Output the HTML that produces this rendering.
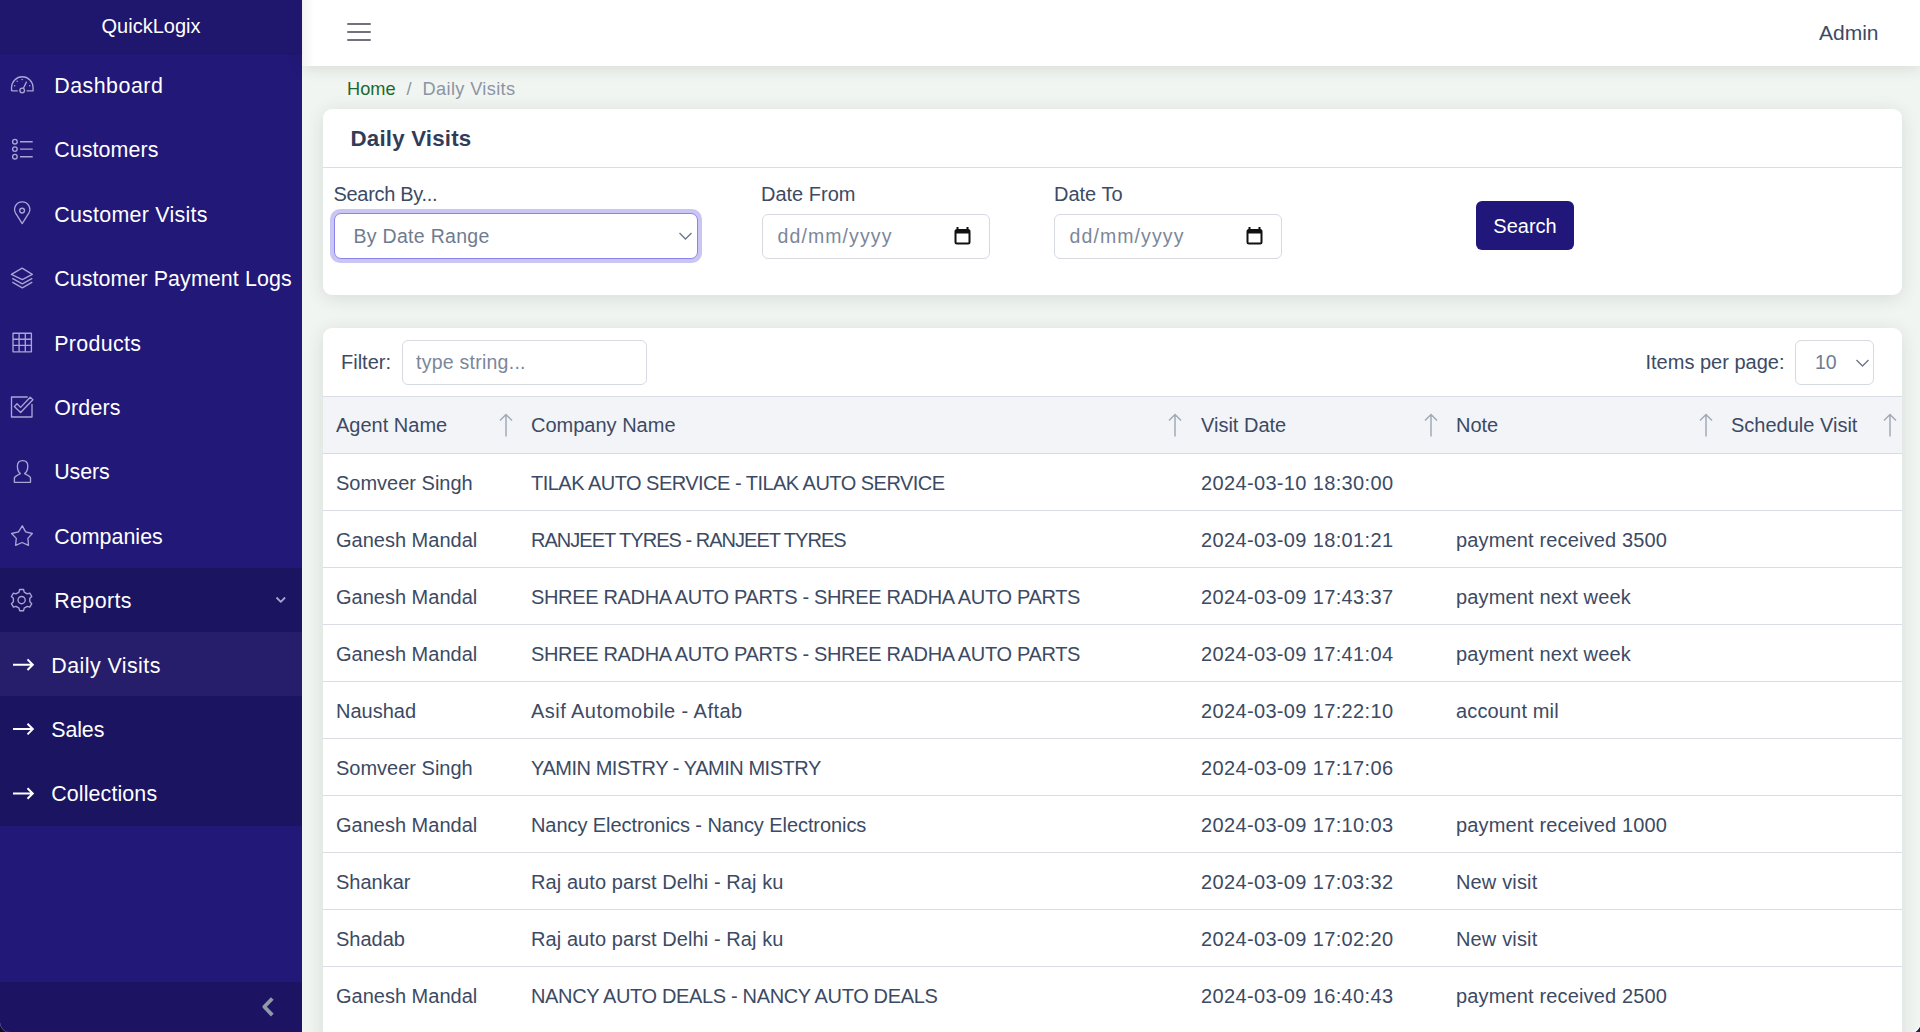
<!DOCTYPE html>
<html><head><meta charset="utf-8">
<style>
*{box-sizing:border-box;margin:0;padding:0}
html,body{width:1920px;height:1032px;overflow:hidden}
body{position:relative;background:#f1f5f1;font-family:"Liberation Sans",sans-serif;color:#3c4a64}
.abs{position:absolute}
#sb{position:absolute;left:0;top:0;width:302px;height:1032px;background:#221877;color:#fff}
#brand{position:absolute;left:0;top:0;width:302px;height:53px;background:#1f166e;box-shadow:0 1px 1px rgba(0,0,0,.10);z-index:1;text-align:center;font-size:20px;line-height:52px}
.nav{position:absolute;left:0;width:302px;height:64.4px;font-size:21.4px;line-height:64.4px;letter-spacing:.1px;white-space:nowrap}
.nav .t{position:absolute;top:1px}
#grp{position:absolute;left:0;top:568px;width:302px;height:257.6px;background:#1b1461}
#tog{position:absolute;left:0;top:981.5px;width:302px;height:50.5px;background:#1c1463}
#hdr{position:absolute;left:302px;top:0;width:1618px;height:66px;background:#fff;box-shadow:0 2px 14px rgba(20,45,30,.13)}
#hdr:before{content:'';position:absolute;left:0;top:0;width:12px;height:66px;background:linear-gradient(to right,rgba(0,0,0,.05),rgba(0,0,0,0))}
.card{position:absolute;left:323px;width:1579px;background:#fff;border-radius:9px;box-shadow:0 3px 18px rgba(20,45,30,.12)}
.lbl{position:absolute;font-size:20px;line-height:24px;white-space:nowrap}
.inp{position:absolute;height:45px;border:1px solid #d6d9df;border-radius:6px;background:#fff}
.ph{position:absolute;font-size:19.5px;line-height:24px;color:#7b879a;white-space:nowrap}
.row{position:absolute;left:0;width:1579px;height:57px;border-bottom:1px solid #d9dce2}
.row div{position:absolute;top:1px;line-height:56px;font-size:20px;white-space:nowrap}
.arr{position:absolute}
.th{position:absolute;top:1px;line-height:55px;font-size:20px;white-space:nowrap}

.c2{letter-spacing:.35px}
.c3{letter-spacing:.15px}

</style></head><body>
<div id="sb">
  <div id="brand">QuickLogix</div>
  <div id="grp"></div>
  <div class="abs" style="left:0;top:632px;width:302px;height:64.4px;background:#261e6b"></div>
  <div id="tog"><svg class="abs" style="left:0;top:0" width="302" height="51" viewBox="0 981.5 302 51" stroke="#9198aa" fill="none" stroke-width="3.8" stroke-linejoin="round"><path d="M272.3 998 L264.3 1006.3 L272.3 1014.6"/></svg></div>
  <div class="nav" style="top:53.0px"><span class="t" style="left:54.2px;letter-spacing:0.5px">Dashboard</span></div><div class="nav" style="top:117.4px"><span class="t" style="left:54.2px;letter-spacing:0.1px">Customers</span></div><div class="nav" style="top:181.8px"><span class="t" style="left:54.2px;letter-spacing:0.28px">Customer Visits</span></div><div class="nav" style="top:246.2px"><span class="t" style="left:54.2px;letter-spacing:0.1px">Customer Payment Logs</span></div><div class="nav" style="top:310.6px"><span class="t" style="left:54.2px;letter-spacing:0.35px">Products</span></div><div class="nav" style="top:375.0px"><span class="t" style="left:54.2px;letter-spacing:0.2px">Orders</span></div><div class="nav" style="top:439.4px"><span class="t" style="left:54.2px;letter-spacing:-0.1px">Users</span></div><div class="nav" style="top:503.8px"><span class="t" style="left:54.2px;letter-spacing:0.05px">Companies</span></div><div class="nav" style="top:568.2px"><span class="t" style="left:54.2px;letter-spacing:0.4px">Reports</span></div><div class="nav" style="top:632.6px"><span class="t" style="left:51.25px;letter-spacing:0.45px">Daily Visits</span></div><div class="nav" style="top:697.0px"><span class="t" style="left:51.25px;letter-spacing:-0.1px">Sales</span></div><div class="nav" style="top:761.4px"><span class="t" style="left:51.25px;letter-spacing:0.12px">Collections</span></div><svg class="abs" style="left:0;top:0" width="302" height="1032" viewBox="0 0 302 1032" fill="none" stroke="#a9a5d6" stroke-width="1.35" stroke-linejoin="round">
<path d="M11.55 90.9 V87.5 A10.75 10.75 0 0 1 33.05 87.5 V90.9 H26.6 M11.55 90.9 H17.8"/>
<circle cx="22.2" cy="90.4" r="2.3"/><path d="M23.4 88.2 L26.6 81.6"/>
<g fill="#a9a5d6" stroke="none"><circle cx="14.6" cy="85.8" r=".75"/><circle cx="17.2" cy="81.3" r=".75"/><circle cx="22.15" cy="79.5" r=".75"/><circle cx="29.7" cy="85.8" r=".75"/></g>
<circle cx="14.9" cy="141.7" r="2.3"/><circle cx="14.9" cy="149.1" r="2.3"/><circle cx="14.9" cy="156.7" r="2.3"/>
<path d="M20 141.7H32.7M20 149.1H32.7M20 156.7H32.7"/>
<path d="M22.2 223.6 L15.6 213.2 A7.6 7.6 0 1 1 28.8 213.2 Z"/><circle cx="22.1" cy="210.6" r="2.4"/>
<path d="M11.4 274.4 L22.1 268.2 L32.3 274.4 L22.3 279.6 Z"/><path d="M12.3 278.3 L22.3 283.9 L32.3 278.3"/><path d="M12.3 282.2 L22.3 287.9 L32.3 282.2"/>
<rect x="13" y="333.2" width="18.4" height="18.6"/><path d="M19.1 333.2V351.8M25.3 333.2V351.8M13 339.2H31.4M13 345.3H31.4"/>
<path d="M27.7 397 H11.5 V417 H32 V403.9"/><path d="M14.3 406.6 L17 403.7 L20.6 407.4 L30.2 397.2 L32.9 399.7 L20.6 412.5 Z"/>
<path d="M20.3 473.6 C18.2 472, 17.4 469, 17.4 466 C17.4 462.6, 19.6 460.6, 22.6 460.6 C25.6 460.6, 27.8 462.6, 27.8 466 C27.8 469, 27 472, 24.6 473.6 C27.5 475, 29.8 476, 30.5 477.8 V482.3 H14.4 V477.8 C15.2 476, 17.4 475, 20.3 473.6 Z"/>
<path d="M22.3 525.8 L25.7 531.9 L32.3 533.5 L27.9 538.4 L28.5 545.3 L22.1 542.5 L15.6 545.3 L16.3 538.4 L11.6 533.5 L18.5 531.9 Z"/>
<path d="M19.00 592.10 L19.60 589.50 L23.60 589.50 L24.20 592.10 L27.23 593.85 L29.78 593.07 L31.78 596.53 L29.83 598.35 L29.83 601.85 L31.78 603.67 L29.78 607.13 L27.23 606.35 L24.20 608.10 L23.60 610.70 L19.60 610.70 L19.00 608.10 L15.97 606.35 L13.42 607.13 L11.42 603.67 L13.37 601.85 L13.37 598.35 L11.42 596.53 L13.42 593.07 L15.97 593.85Z"/><circle cx="21.6" cy="600.1" r="3.6"/>
<path d="M276.5 597.5 L280.8 601.8 L285.1 597.5" stroke-width="1.8"/>
<g stroke="#fff" stroke-width="2" stroke-linejoin="miter"><path d="M13 664.7H33M27.5 659.4 L32.8 664.7 L27.5 670"/><path d="M13 729.1H33M27.5 723.8 L32.8 729.1 L27.5 734.4"/><path d="M13 793.5H33M27.5 788.2 L32.8 793.5 L27.5 798.8"/></g>
</svg>
</div>

<div id="hdr">
  <div class="abs" style="left:44.6px;top:22.6px;width:24.4px;height:2.3px;background:#73707f;border-radius:1.2px"></div>
  <div class="abs" style="left:44.6px;top:30.7px;width:24.4px;height:2.3px;background:#73707f;border-radius:1.2px"></div>
  <div class="abs" style="left:44.6px;top:38.9px;width:24.4px;height:2.3px;background:#73707f;border-radius:1.2px"></div>
  <div class="abs" id="admin" style="left:1517px;top:20px;font-size:21px;line-height:25px">Admin</div>
</div>

<div class="abs" id="bc" style="left:347px;top:77.5px;font-size:18.2px;line-height:22px;white-space:nowrap"><span style="color:#1b6a2c">Home</span><span style="color:#8b94a3;padding:0 11px 0 11px">/</span><span style="color:#8b94a3;letter-spacing:.35px">Daily Visits</span></div>

<div class="card" style="top:109px;height:186px">
  <div class="abs" style="left:0;top:0;width:1579px;height:58.5px;border-bottom:1px solid #dcdde3"></div>
  <div class="abs" id="title" style="left:28px;top:124px;font-size:22.3px;font-weight:700;line-height:26px;color:#2f3d5a"></div>
</div>
<div class="abs" style="left:350.5px;top:126px;font-size:22.3px;font-weight:700;line-height:26px;color:#2f3d5a;white-space:nowrap;letter-spacing:.2px">Daily Visits</div>

<div class="lbl" style="left:333.5px;top:182px;letter-spacing:-.3px">Search By...</div>
<div class="abs" style="left:329.5px;top:209px;width:372px;height:54px;border-radius:10px;background:#c9c6f3"></div>
<div class="inp" style="left:333.5px;top:213px;width:364px;height:46px;border:1.5px solid #8c84ec;border-radius:7px"></div>
<div class="ph" style="left:353.5px;top:223.7px;color:#6f7c8f;letter-spacing:.3px">By Date Range</div>
<svg class="abs" style="left:678px;top:231px" width="15" height="10" viewBox="0 0 15 10" stroke="#6c7888" fill="none" stroke-width="1.4"><path d="M1.5 2l6 6 6-6"/></svg>

<div class="lbl" style="left:761px;top:182px">Date From</div>
<div class="inp" style="left:761.5px;top:213.5px;width:228px"></div>
<div class="ph" style="left:777.5px;top:224px;letter-spacing:1.1px">dd/mm/yyyy</div>
<svg class="abs" style="left:954px;top:227px" width="17" height="18" viewBox="0 0 17 18"><path d="M3.5 0v3M13.5 0v3" stroke="#111" stroke-width="2"/><rect x="1.5" y="3" width="14" height="13.5" rx="1.5" stroke="#111" stroke-width="2" fill="none"/><rect x="1.5" y="3" width="14" height="3.5" fill="#111"/></svg>

<div class="lbl" style="left:1054px;top:182px">Date To</div>
<div class="inp" style="left:1054px;top:213.5px;width:228px"></div>
<div class="ph" style="left:1069.5px;top:224px;letter-spacing:1.1px">dd/mm/yyyy</div>
<svg class="abs" style="left:1246px;top:227px" width="17" height="18" viewBox="0 0 17 18"><path d="M3.5 0v3M13.5 0v3" stroke="#111" stroke-width="2"/><rect x="1.5" y="3" width="14" height="13.5" rx="1.5" stroke="#111" stroke-width="2" fill="none"/><rect x="1.5" y="3" width="14" height="3.5" fill="#111"/></svg>

<div class="abs" style="left:1476px;top:201px;width:98px;height:49px;background:#21177a;border-radius:6px;color:#fff;font-size:20px;line-height:51px;text-align:center">Search</div>

<div class="card" style="top:328px;height:720px;overflow:hidden">
  <div class="lbl" style="left:18px;top:22px">Filter:</div>
  <div class="inp" style="left:78.5px;top:11.5px;width:245px"></div>
  <div class="ph" style="left:93px;top:22px;letter-spacing:.25px">type string...</div>
  <div class="lbl" style="left:1322.5px;top:22px">Items per page:</div>
  <div class="inp" style="left:1471.5px;top:11.5px;width:79px"></div>
  <div class="ph" style="left:1492px;top:22px;color:#6f7c8f">10</div>
  <svg class="abs" style="left:1532px;top:30px" width="15" height="10" viewBox="0 0 15 10" stroke="#6c7888" fill="none" stroke-width="1.4"><path d="M1.5 2l6 6 6-6"/></svg>
  <div class="abs" style="left:0;top:68px;width:1579px;height:58px;background:#f3f4f7;border-top:1px solid #d9dce2;border-bottom:1px solid #d9dce2"><div class="th" style="left:13px">Agent Name</div><div class="arr" style="left:175.8px;top:15.5px;line-height:0"><svg width="14" height="24" viewBox="0 0 14 24" stroke="#a2aab7" fill="none" stroke-width="1.5"><path d="M7 23.5V1.5M1 7.5l6-6 6 6"/></svg></div><div class="th" style="left:208px">Company Name</div><div class="arr" style="left:844.8px;top:15.5px;line-height:0"><svg width="14" height="24" viewBox="0 0 14 24" stroke="#a2aab7" fill="none" stroke-width="1.5"><path d="M7 23.5V1.5M1 7.5l6-6 6 6"/></svg></div><div class="th" style="left:878px">Visit Date</div><div class="arr" style="left:1100.6px;top:15.5px;line-height:0"><svg width="14" height="24" viewBox="0 0 14 24" stroke="#a2aab7" fill="none" stroke-width="1.5"><path d="M7 23.5V1.5M1 7.5l6-6 6 6"/></svg></div><div class="th" style="left:1133px">Note</div><div class="arr" style="left:1376px;top:15.5px;line-height:0"><svg width="14" height="24" viewBox="0 0 14 24" stroke="#a2aab7" fill="none" stroke-width="1.5"><path d="M7 23.5V1.5M1 7.5l6-6 6 6"/></svg></div><div class="th" style="left:1408px">Schedule Visit</div><div class="arr" style="left:1559.5px;top:15.5px;line-height:0"><svg width="14" height="24" viewBox="0 0 14 24" stroke="#a2aab7" fill="none" stroke-width="1.5"><path d="M7 23.5V1.5M1 7.5l6-6 6 6"/></svg></div></div><div class="row" style="top:126px"><div class="c0" style="left:13px">Somveer Singh</div><div class="c1" style="left:208px;letter-spacing:-0.52px">TILAK AUTO SERVICE - TILAK AUTO SERVICE</div><div class="c2" style="left:878px">2024-03-10 18:30:00</div><div class="c3" style="left:1133px"></div></div><div class="row" style="top:183px"><div class="c0" style="left:13px">Ganesh Mandal</div><div class="c1" style="left:208px;letter-spacing:-0.98px">RANJEET TYRES - RANJEET TYRES</div><div class="c2" style="left:878px">2024-03-09 18:01:21</div><div class="c3" style="left:1133px">payment received 3500</div></div><div class="row" style="top:240px"><div class="c0" style="left:13px">Ganesh Mandal</div><div class="c1" style="left:208px;letter-spacing:-0.33px">SHREE RADHA AUTO PARTS - SHREE RADHA AUTO PARTS</div><div class="c2" style="left:878px">2024-03-09 17:43:37</div><div class="c3" style="left:1133px">payment next week</div></div><div class="row" style="top:297px"><div class="c0" style="left:13px">Ganesh Mandal</div><div class="c1" style="left:208px;letter-spacing:-0.33px">SHREE RADHA AUTO PARTS - SHREE RADHA AUTO PARTS</div><div class="c2" style="left:878px">2024-03-09 17:41:04</div><div class="c3" style="left:1133px">payment next week</div></div><div class="row" style="top:354px"><div class="c0" style="left:13px">Naushad</div><div class="c1" style="left:208px;letter-spacing:0.45px">Asif Automobile - Aftab</div><div class="c2" style="left:878px">2024-03-09 17:22:10</div><div class="c3" style="left:1133px">account mil</div></div><div class="row" style="top:411px"><div class="c0" style="left:13px">Somveer Singh</div><div class="c1" style="left:208px;letter-spacing:-0.46px">YAMIN MISTRY - YAMIN MISTRY</div><div class="c2" style="left:878px">2024-03-09 17:17:06</div><div class="c3" style="left:1133px"></div></div><div class="row" style="top:468px"><div class="c0" style="left:13px">Ganesh Mandal</div><div class="c1" style="left:208px;letter-spacing:-0.07px">Nancy Electronics - Nancy Electronics</div><div class="c2" style="left:878px">2024-03-09 17:10:03</div><div class="c3" style="left:1133px">payment received 1000</div></div><div class="row" style="top:525px"><div class="c0" style="left:13px">Shankar</div><div class="c1" style="left:208px;letter-spacing:0.08px">Raj auto parst Delhi - Raj ku</div><div class="c2" style="left:878px">2024-03-09 17:03:32</div><div class="c3" style="left:1133px">New visit</div></div><div class="row" style="top:582px"><div class="c0" style="left:13px">Shadab</div><div class="c1" style="left:208px;letter-spacing:0.08px">Raj auto parst Delhi - Raj ku</div><div class="c2" style="left:878px">2024-03-09 17:02:20</div><div class="c3" style="left:1133px">New visit</div></div><div class="row" style="top:639px;border-bottom:0"><div class="c0" style="left:13px">Ganesh Mandal</div><div class="c1" style="left:208px;letter-spacing:-0.35px">NANCY AUTO DEALS - NANCY AUTO DEALS</div><div class="c2" style="left:878px">2024-03-09 16:40:43</div><div class="c3" style="left:1133px">payment received 2500</div></div>
</div>

<svg class="abs" style="left:0;top:1012px" width="20" height="20" viewBox="0 1012 20 20"><path d="M0 1023 A10 10 0 0 0 10 1033 L0 1033 Z" fill="#0b0f1e"/><path d="M0 1023 A10 10 0 0 0 10 1032.5 H20" fill="none" stroke="#4a4590" stroke-width="1"/></svg>
<svg class="abs" style="left:1900px;top:1012px" width="20" height="20" viewBox="1900 1012 20 20"><path d="M1920 1024 A9 9 0 0 1 1911 1033 L1920 1033 Z" fill="#0a2e55"/><path d="M1920 1024 A9 9 0 0 1 1911 1032.5 H1905" fill="none" stroke="#ffffff" stroke-width="1"/></svg>
</body></html>
